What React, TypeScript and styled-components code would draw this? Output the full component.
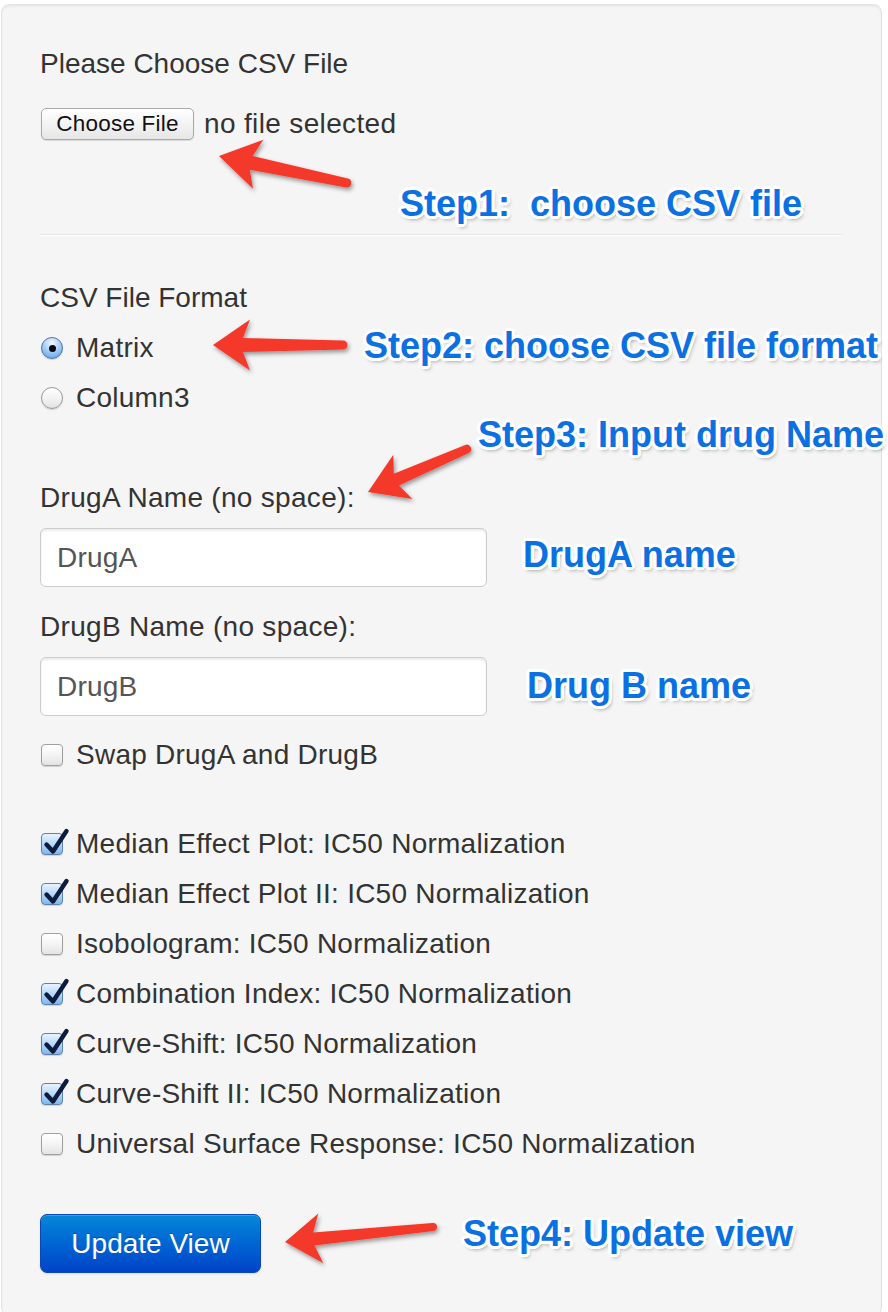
import React from "react";
import styled, { createGlobalStyle } from "styled-components";

const GlobalStyle = createGlobalStyle`
  html, body { margin: 0; padding: 0; background: #ffffff; }
  body { font-family: "Liberation Sans", Arial, Helvetica, sans-serif; color: #333333; }
  * { box-sizing: border-box; }
`;

const Page = styled.div`
  position: relative;
  width: 888px;
  height: 1312px;
  overflow: hidden;
  padding: 4px 6px 0 1px;
`;

const Well = styled.form`
  width: 881px;
  min-height: 1312px;
  background: #f5f5f5;
  border: 1px solid #e3e3e3;
  border-radius: 8px;
  box-shadow: inset 0 2px 2px rgba(0, 0, 0, 0.05);
  padding: 39px 38px 38px 38px;
  display: flex;
  flex-direction: column;
  align-items: flex-start;
`;

const FieldLabel = styled.label<{ $mb?: number; $ls?: number }>`
  display: block;
  font-size: 28px;
  line-height: 40px;
  color: #333333;
  letter-spacing: ${(p) => p.$ls ?? 0}px;
  margin-bottom: ${(p) => p.$mb ?? 10}px;
`;

const FileRow = styled.div`
  height: 60px;
  display: flex;
  align-items: center;
  gap: 10px;
  margin-bottom: 80px;
  font-size: 28px;
  letter-spacing: 0.35px;
  color: #333333;
`;

const FileButton = styled.button`
  margin-left: 1px;
  width: 153px;
  height: 32px;
  padding: 0;
  border: 1px solid #a9a9a9;
  border-radius: 5px;
  background: linear-gradient(#ffffff, #f1f1f1 60%, #e6e6e6);
  box-shadow: 0 1px 1px rgba(0, 0, 0, 0.12);
  font-family: "Liberation Sans", Arial, sans-serif;
  font-size: 22.5px;
  letter-spacing: 0.2px;
  color: #111111;
  line-height: 30px;
`;

const Divider = styled.hr`
  width: 100%;
  height: 0;
  margin: 0 0 42px 0;
  border: 0;
  border-top: 1px solid #e6e6e6;
  border-bottom: 1px solid #ffffff;
`;

const OptionRow = styled.label<{ $mb?: number }>`
  height: 40px;
  display: flex;
  align-items: center;
  font-size: 28px;
  letter-spacing: 0.24px;
  color: #333333;
  margin-bottom: ${(p) => p.$mb ?? 10}px;
`;

const RadioDot = styled.span<{ $on?: boolean }>`
  position: relative;
  flex: none;
  width: 22px;
  height: 22px;
  margin-left: 1px;
  margin-right: 13px;
  border-radius: 50%;
  border: 1px solid ${(p) => (p.$on ? "#4f77a6" : "#9a9a9a")};
  background: ${(p) =>
    p.$on
      ? "radial-gradient(circle at 50% 25%, #f2f8ff 0%, #b2d5f7 40%, #4f9be6 100%)"
      : "linear-gradient(#ffffff, #f3f3f3 50%, #e2e2e2)"};
  box-shadow: 0 1px 1px rgba(0, 0, 0, 0.15);
  &::after {
    content: "";
    display: ${(p) => (p.$on ? "block" : "none")};
    position: absolute;
    left: 50%;
    top: 50%;
    width: 7px;
    height: 7px;
    margin: -3.5px 0 0 -3.5px;
    border-radius: 50%;
    background: #0a0a14;
  }
`;

const CheckBox = styled.span<{ $on?: boolean }>`
  position: relative;
  flex: none;
  width: 22px;
  height: 22px;
  margin-left: 1px;
  margin-right: 13px;
  border-radius: 4px;
  border: 1px solid ${(p) => (p.$on ? "#5f82ab" : "#a0a0a0")};
  background: ${(p) =>
    p.$on
      ? "linear-gradient(#e8f3ff, #b7d8f9 50%, #7fb7ef)"
      : "linear-gradient(#ffffff, #f4f4f4 50%, #e4e4e4)"};
  box-shadow: 0 1px 1px rgba(0, 0, 0, 0.15);
`;

const CheckMark = styled.svg`
  position: absolute;
  left: -1px;
  top: -6px;
  width: 30px;
  height: 30px;
  overflow: visible;
`;

const TextInput = styled.input<{ $mb?: number }>`
  width: 447px;
  height: 59px;
  padding: 0 16px;
  border: 1px solid #cccccc;
  border-radius: 6px;
  background: #ffffff;
  box-shadow: inset 0 2px 2px rgba(0, 0, 0, 0.075);
  font-family: "Liberation Sans", Arial, sans-serif;
  font-size: 28px;
  letter-spacing: 0.2px;
  color: #555555;
  margin: 0 0 ${(p) => p.$mb ?? 20}px 0;
  outline: none;
`;

const PrimaryButton = styled.button`
  width: 221px;
  height: 59px;
  padding: 0;
  border: 1px solid #0b47b8;
  border-radius: 7px;
  background: linear-gradient(#0487d8, #0062d2 55%, #0043c8);
  box-shadow: inset 0 1px 0 rgba(255, 255, 255, 0.2), 0 1px 2px rgba(0, 0, 0, 0.1);
  font-family: "Liberation Sans", Arial, sans-serif;
  font-size: 28px;
  color: #ffffff;
  text-shadow: 0 -1px 0 rgba(0, 0, 0, 0.25);
`;

const Overlay = styled.div`
  position: absolute;
  left: 0;
  top: 0;
  width: 888px;
  height: 1312px;
  pointer-events: none;
`;

const ArrowLayer = styled.svg`
  position: absolute;
  left: 0;
  top: 0;
  width: 888px;
  height: 1312px;
  overflow: visible;
`;

const Callout = styled.div<{ $x: number; $y: number }>`
  position: absolute;
  left: ${(p) => p.$x}px;
  top: ${(p) => p.$y}px;
  white-space: pre;
  font-family: "Liberation Sans", Arial, Helvetica, sans-serif;
  font-weight: 700;
  font-size: 36px;
  line-height: 40px;
  color: #0b70e2;
  text-shadow:
    3px 0 0 #fff, -3px 0 0 #fff, 0 3px 0 #fff, 0 -3px 0 #fff,
    2px 2px 0 #fff, -2px 2px 0 #fff, 2px -2px 0 #fff, -2px -2px 0 #fff,
    3px 1px 0 #fff, -3px 1px 0 #fff, 3px -1px 0 #fff, -3px -1px 0 #fff,
    1px 3px 0 #fff, -1px 3px 0 #fff, 1px -3px 0 #fff, -1px -3px 0 #fff,
    2px 3px 4px rgba(0, 0, 0, 0.45);
`;

type Pt = [number, number];

function arrowPath(tip: Pt, tail: Pt, headLen: number, headW: number, w1: number, w2: number) {
  const dx = tail[0] - tip[0];
  const dy = tail[1] - tip[1];
  const L = Math.hypot(dx, dy);
  const ux = dx / L;
  const uy = dy / L;
  const nx = -uy;
  const ny = ux;
  const bx = tip[0] + ux * headLen;
  const by = tip[1] + uy * headLen;
  const kx = tip[0] + ux * (headLen - 7);
  const ky = tip[1] + uy * (headLen - 7);
  const p = (x: number, y: number) => `${x.toFixed(1)},${y.toFixed(1)}`;
  return [
    `M${p(tip[0], tip[1])}`,
    `L${p(bx + (nx * headW) / 2, by + (ny * headW) / 2)}`,
    `L${p(kx + (nx * w2) / 2, ky + (ny * w2) / 2)}`,
    `L${p(tail[0] + (nx * w1) / 2, tail[1] + (ny * w1) / 2)}`,
    `A${w1 / 2},${w1 / 2} 0 0 0 ${p(tail[0] - (nx * w1) / 2, tail[1] - (ny * w1) / 2)}`,
    `L${p(kx - (nx * w2) / 2, ky - (ny * w2) / 2)}`,
    `L${p(bx - (nx * headW) / 2, by - (ny * headW) / 2)}`,
    "Z",
  ].join(" ");
}

const arrows: { tip: Pt; tail: Pt; hl: number; hw: number; w1: number; w2: number }[] = [
  { tip: [219, 156], tail: [347, 183], hl: 40, hw: 50, w1: 9, w2: 14 },
  { tip: [213, 345], tail: [343, 345], hl: 37, hw: 51, w1: 9, w2: 14 },
  { tip: [368, 492], tail: [467, 449], hl: 38, hw: 48, w1: 9, w2: 13 },
  { tip: [285, 1242], tail: [433, 1227], hl: 36, hw: 50, w1: 8, w2: 13 },
];

const callouts: { x: number; y: number; text: string }[] = [
  { x: 400, y: 184, text: "Step1:  choose CSV file" },
  { x: 364, y: 326, text: "Step2: choose CSV file format" },
  { x: 478, y: 415, text: "Step3: Input drug Name" },
  { x: 523, y: 535, text: "DrugA name" },
  { x: 527, y: 666, text: "Drug B name" },
  { x: 463, y: 1214, text: "Step4: Update view" },
];

const plots: { label: string; on: boolean }[] = [
  { label: "Median Effect Plot: IC50 Normalization", on: true },
  { label: "Median Effect Plot II: IC50 Normalization", on: true },
  { label: "Isobologram: IC50 Normalization", on: false },
  { label: "Combination Index: IC50 Normalization", on: true },
  { label: "Curve-Shift: IC50 Normalization", on: true },
  { label: "Curve-Shift II: IC50 Normalization", on: true },
  { label: "Universal Surface Response: IC50 Normalization", on: false },
];

function Check({ on }: { on: boolean }) {
  return (
    <CheckBox $on={on}>
      {on && (
        <CheckMark viewBox="0 0 30 30">
          <path
            d="M5.5 16.5 L12 23.5 L25.5 3"
            fill="none"
            stroke="#0d1b3d"
            strokeWidth="4.4"
            strokeLinecap="round"
            strokeLinejoin="round"
          />
        </CheckMark>
      )}
    </CheckBox>
  );
}

export default function App() {
  return (
    <Page>
      <GlobalStyle />
      <Well onSubmit={(e) => e.preventDefault()}>
        <FieldLabel>Please Choose CSV File</FieldLabel>
        <FileRow>
          <FileButton type="button">Choose File</FileButton>
          <span>no file selected</span>
        </FileRow>
        <Divider />

        <FieldLabel>CSV File Format</FieldLabel>
        <OptionRow>
          <RadioDot $on />
          Matrix
        </OptionRow>
        <OptionRow $mb={60}>
          <RadioDot />
          Column3
        </OptionRow>

        <FieldLabel $ls={0.3}>DrugA Name (no space):</FieldLabel>
        <TextInput defaultValue="DrugA" $mb={20} />
        <FieldLabel $ls={0.3}>DrugB Name (no space):</FieldLabel>
        <TextInput defaultValue="DrugB" $mb={19} />

        <OptionRow $mb={49}>
          <Check on={false} />
          Swap DrugA and DrugB
        </OptionRow>

        {plots.map((p, i) => (
          <OptionRow key={p.label} $mb={i === plots.length - 1 ? 50 : 10}>
            <Check on={p.on} />
            {p.label}
          </OptionRow>
        ))}

        <PrimaryButton type="button">Update View</PrimaryButton>
      </Well>

      <Overlay>
        <ArrowLayer viewBox="0 0 888 1312">
          <defs>
            <filter id="arrowShadow" x="-20%" y="-20%" width="140%" height="140%">
              <feDropShadow dx="1.5" dy="2.5" stdDeviation="2" floodColor="#000" floodOpacity="0.4" />
            </filter>
          </defs>
          {arrows.map((a, i) => (
            <path
              key={i}
              d={arrowPath(a.tip, a.tail, a.hl, a.hw, a.w1, a.w2)}
              fill="#f4392b"
              filter="url(#arrowShadow)"
            />
          ))}
        </ArrowLayer>
        {callouts.map((c) => (
          <Callout key={c.text} $x={c.x} $y={c.y}>
            {c.text}
          </Callout>
        ))}
      </Overlay>
    </Page>
  );
}
